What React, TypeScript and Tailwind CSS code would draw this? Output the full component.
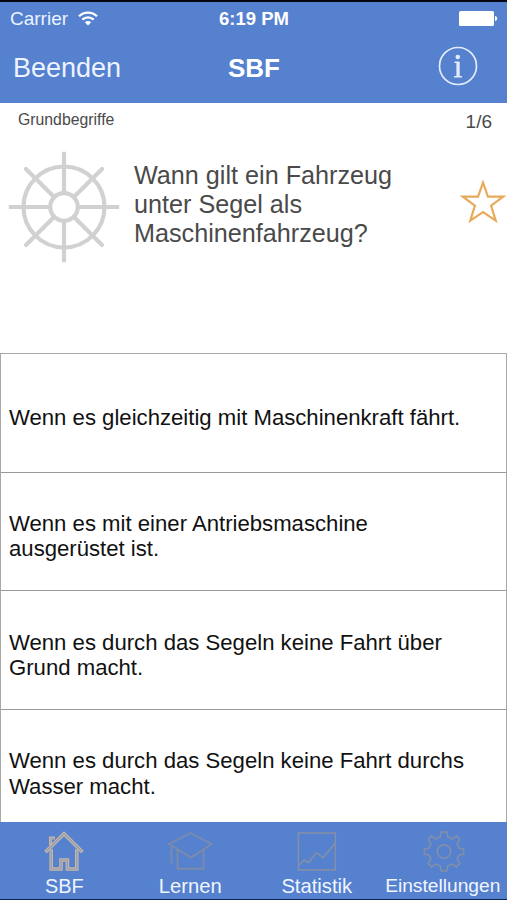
import type { ReactNode } from "react";

const answers = [
  { id: 1, lines: ["Wenn es gleichzeitig mit Maschinenkraft fährt."] },
  { id: 2, lines: ["Wenn es mit einer Antriebsmaschine", "ausgerüstet ist."] },
  { id: 3, lines: ["Wenn es durch das Segeln keine Fahrt über", "Grund macht."] },
  { id: 4, lines: ["Wenn es durch das Segeln keine Fahrt durchs", "Wasser macht."] },
];

const WifiIcon = () => (
  <svg width="20" height="15" viewBox="0 0 20 15" fill="none" stroke="#fff" strokeWidth="2.2">
    <path d="M1 5.2C6 .3 14 .3 19 5.2" />
    <path d="M4.3 8.6c3.2-3.1 8.2-3.1 11.4 0" />
    <path d="M6.8 11.2c1.8-1.7 4.6-1.7 6.4 0L10 14.4z" fill="#fff" stroke="none" />
  </svg>
);

const BatteryIcon = () => (
  <svg width="39" height="15" viewBox="0 0 39 15" fill="#fff">
    <rect width="35" height="15" rx="1.5" />
    <path d="M36 5c3 .5 3 4.5 0 5z" />
  </svg>
);

const InfoIcon = () => (
  <svg width="40" height="40" viewBox="0 0 40 40" fill="none" stroke="#e3ecfc">
    <circle cx="20" cy="20" r="18.5" strokeWidth="1.7" />
    <circle cx="19.8" cy="11" r="2.3" fill="#e3ecfc" stroke="none" />
    <path d="M16.5 16.2h4v14.5M16 30.8h8" strokeWidth="1.5" />
    <path d="M20 16v15" strokeWidth="3.2" />
  </svg>
);

const WheelIcon = () => (
  <svg width="112" height="112" viewBox="0 0 112 112" fill="none" stroke="#d1d1d1" strokeWidth="4.2">
    <circle cx="56" cy="56" r="40.5" />
    <circle cx="56" cy="56" r="13.8" />
    <path d="M56 .8v41.4M56 69.8v41.4M.8 56h41.4M69.8 56h41.4" />
    <path d="M18 18l28.3 28.3M65.7 65.7L94 94M94 18L65.7 46.3M46.3 65.7L18 94" strokeLinecap="round" />
  </svg>
);

const StarIcon = () => (
  <svg width="46" height="46" viewBox="0 0 46 46" fill="none" stroke="#e8ab5c" strokeWidth="2.2">
    <path d="M23 3.5l4.9 14.2h15.2L31.1 26.6l4.6 15L23 33l-12.7 8.6 4.6-15L2.9 17.7h15.2z" />
  </svg>
);

// The house is a hollow band: a wide stroke with a thin darker core on top
const HouseIcon = () => (
  <svg width="42" height="42" viewBox="0 0 42 42" fill="none">
    <g stroke="#c8b7a5" strokeWidth="3.6">
      <path d="M2.5 22L21 3.8 39.5 22" />
      <path d="M8.2 19v20h9.8V30h6.4v9h9.4V19" />
      <path d="M7.5 15V8h4.5" strokeWidth="3" />
    </g>
    <g stroke="#8f9bb8" strokeWidth="1.2">
      <path d="M3.5 21L21 3.8 38.5 21" />
      <path d="M8.2 19v20h9.8V30h6.4v9h9.4V19" />
      <path d="M7.7 14V8.2h3.5" strokeWidth=".8" />
    </g>
  </svg>
);

const CapIcon = () => (
  <svg width="46" height="42" viewBox="0 0 46 42" fill="none" stroke="#7b8bab" strokeWidth="1.9">
    <path d="M1 14L22.5 3 43.5 14 23 27.5z" />
    <path d="M9.5 19.5v19.2h26V19.2M3.5 15.5v18" />
  </svg>
);

const ChartIcon = () => (
  <svg width="42" height="42" viewBox="0 0 42 42" fill="none" stroke="#8590a6" strokeWidth="1.5">
    <rect x="2.4" y="3" width="37" height="37" />
    <path d="M3 35l5-5 4.3 2.7 8-10 7 5L39 13.3" />
  </svg>
);

const GearIcon = () => (
  <svg width="42" height="42" viewBox="0 0 42 42" fill="none" stroke="#8590a6" strokeWidth="1.5">
    <path
      strokeLinejoin="round"
      d="M18 2h6l.8 5 4.5 2 4.3-3.2 3.2 3.6-2.7 4.2 1.8 4.4 4.8.9v5l-4.8 1-1.8 4.2 2.8 4.3-3.5 3.5-4.2-2.8-4.4 1.8L24 41h-6l-.8-5.1-4.4-1.8-4.2 2.8-3.5-3.5L7.9 29 6.1 24.9l-4.8-1v-5l4.8-.9 1.8-4.4-2.8-4.2 3.3-3.6L12.7 9l4.5-2z"
    />
    <circle cx="21" cy="21.5" r="6.7" />
  </svg>
);

interface TabItemProps {
  label: string;
  icon: ReactNode;
  labelClass?: string;
}

const TabItem = ({ label, icon, labelClass = "text-[19.9px]" }: TabItemProps) => (
  <button className="flex w-[126.5px] flex-col items-center whitespace-nowrap pt-[8px]">
    {icon}
    <span className={`mt-[2px] leading-[24px] ${labelClass}`}>{label}</span>
  </button>
);

export default function App() {
  return (
    <div className="flex h-[900px] w-[507px] flex-col overflow-hidden border-t-[2px] border-b border-t-[#05060f] border-b-[#0b2552] bg-white font-['Liberation_Sans',Arial,sans-serif]">
      <header className="h-[101px] shrink-0 bg-[#5581cf] text-white">
        <div className="grid h-[33px] grid-cols-3 items-center pl-[10px] pr-[9px] text-[19px]">
          <div className="flex items-center gap-[10px] text-[#edf3ff]">
            <span className="pt-px">Carrier</span>
            <WifiIcon />
          </div>
          <span className="text-center text-[18.5px] font-bold">6:19 PM</span>
          <div className="flex justify-end">
            <BatteryIcon />
          </div>
        </div>
        <div className="grid h-[62px] grid-cols-3 items-center pl-[13px] pr-[29px] text-[27px]">
          <button className="pt-[5px] text-left text-[#edf3ff]">Beenden</button>
          <h1 className="pl-[17px] pt-[4px] text-center text-[26px] font-bold">SBF</h1>
          <button className="flex justify-end">
            <InfoIcon />
          </button>
        </div>
      </header>

      <section className="h-[250px] shrink-0 text-[#4a4a4a]">
        <div className="flex justify-between pl-[18px] pr-[15px] pt-[6px]">
          <span className="text-[15.8px] leading-[22px]">Grundbegriffe</span>
          <span className="pt-[1px] text-[19px] leading-[24px]">1/6</span>
        </div>
        <div className="flex items-start justify-between pl-[8px] pr-[1px] pt-[17px]">
          <WheelIcon />
          <h2 className="ml-[14px] grow pt-[10px] text-[25.2px] leading-[29px]">
            Wann gilt ein Fahrzeug
            <br />
            unter Segel als
            <br />
            Maschinenfahrzeug?
          </h2>
          <button className="pt-[28px]">
            <StarIcon />
          </button>
        </div>
      </section>

      <main className="h-[469px] shrink-0 overflow-hidden border-x border-t border-[#a9a9a9] text-[22.15px] leading-[25.4px] text-[#111]">
        {answers.map((answer) => (
          <div
            key={answer.id}
            className="flex h-[118.6px] flex-col justify-center whitespace-nowrap border-b border-[#999] pl-[8px] pt-[10px]"
          >
            {answer.lines.map((line) => (
              <p key={line}>{line}</p>
            ))}
          </div>
        ))}
      </main>

      <nav className="flex grow bg-[#5581cf] pl-[1px] text-[#f1f5ff]">
        <TabItem label="SBF" icon={<HouseIcon />} />
        <TabItem label="Lernen" icon={<CapIcon />} labelClass="pr-[1px] text-[20.2px]" />
        <TabItem label="Statistik" icon={<ChartIcon />} labelClass="pr-[1px] text-[20.2px]" />
        <TabItem label="Einstellungen" icon={<GearIcon />} labelClass="pr-[2px] text-[19.2px]" />
      </nav>
    </div>
  );
}
